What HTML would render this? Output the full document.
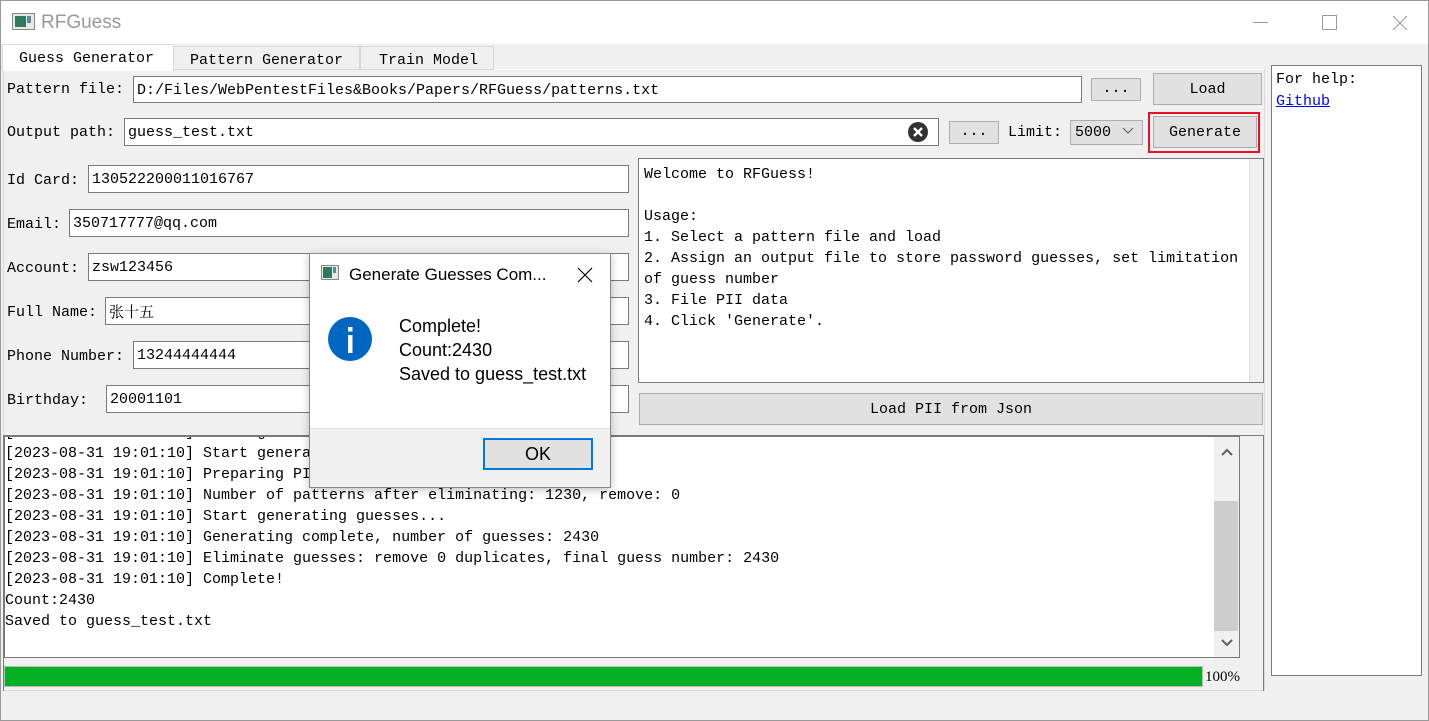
<!DOCTYPE html>
<html><head><meta charset="utf-8"><style>
*{box-sizing:border-box;margin:0;padding:0}
body{width:1429px;height:721px;background:#f0f0f0;position:relative;overflow:hidden;font-family:"Liberation Mono","Noto Sans CJK SC",monospace;font-size:15px;color:#000}
.a{position:absolute}
.t{position:absolute;white-space:pre;line-height:20px}
.in{position:absolute;background:#fff;border:1px solid #7a7a7a;white-space:pre;padding-left:3px;line-height:27px}
.btn{position:absolute;background:#e1e1e1;border:1px solid #adadad;text-align:center;white-space:pre}
.sans{font-family:"Liberation Sans","Noto Sans CJK SC",sans-serif}
</style></head><body>
<div class="a" style="left:0;top:0;width:1429px;height:44px;background:#fff;border-top:1px solid #999"></div>
<div class="a" style="left:0;top:0;width:1px;height:721px;background:#999"></div>
<div class="a" style="left:1428px;top:0;width:1px;height:721px;background:#999"></div>
<div class="a" style="left:0;top:720px;width:1429px;height:1px;background:#999"></div>
<svg class="a" style="left:12px;top:13px" width="23" height="17"><rect x="0.5" y="0.5" width="22" height="16" fill="#e8e8e8" stroke="#888"/><rect x="3" y="3" width="11" height="11" fill="#2f7a5a"/><rect x="15" y="3" width="4" height="7" fill="#5a8a9a"/></svg>
<div class="t sans" style="left:41px;top:12px;font-size:19px;line-height:22px;color:#999">RFGuess</div>
<div class="a" style="left:1253px;top:22px;width:15px;height:1px;background:#999"></div>
<div class="a" style="left:1322px;top:15px;width:15px;height:15px;border:1px solid #999"></div>
<svg class="a" style="left:1392px;top:15px" width="16" height="16"><path d="M1 1L15 15M15 1L1 15" stroke="#999" stroke-width="1"/></svg>

<div class="a" style="left:3px;top:69px;width:1262px;height:622px;border:1px solid #d9d9d9;border-top-color:#fff"></div>
<div class="a" style="left:173px;top:46px;width:187px;height:24px;border:1px solid #d9d9d9;background:#f0f0f0"></div>
<div class="a" style="left:360px;top:46px;width:134px;height:24px;border:1px solid #d9d9d9;background:#f0f0f0"></div>
<div class="a" style="left:2px;top:44px;width:172px;height:27px;background:#fff;border:1px solid #d9d9d9;border-bottom:none"></div>
<div class="t" style="left:19px;top:49px">Guess Generator</div>
<div class="t" style="left:190px;top:51px">Pattern Generator</div>
<div class="t" style="left:379px;top:51px">Train Model</div>

<div class="t" style="left:7px;top:80px">Pattern file:</div>
<div class="in" style="left:133px;top:76px;width:949px;height:27px">D:/Files/WebPentestFiles&amp;Books/Papers/RFGuess/patterns.txt</div>
<div class="btn" style="left:1091px;top:78px;width:50px;height:23px;line-height:20px">...</div>
<div class="btn" style="left:1153px;top:73px;width:109px;height:32px;line-height:31px">Load</div>

<div class="t" style="left:7px;top:123px">Output path:</div>
<div class="in" style="left:124px;top:118px;width:815px;height:28px">guess_test.txt</div>
<svg class="a" style="left:907px;top:121px" width="22" height="22"><circle cx="11" cy="11" r="10" fill="#333"/><path d="M7 7L15 15M15 7L7 15" stroke="#fff" stroke-width="2.4"/></svg>
<div class="btn" style="left:949px;top:121px;width:50px;height:23px;line-height:20px">...</div>
<div class="t" style="left:1008px;top:123px">Limit:</div>
<div class="a" style="left:1070px;top:120px;width:73px;height:25px;background:#e1e1e1;border:1px solid #adadad"></div>
<div class="t" style="left:1075px;top:123px">5000</div>
<svg class="a" style="left:1122px;top:127px" width="12" height="8"><path d="M1 1L6 6L11 1" stroke="#555" fill="none"/></svg>
<div class="btn" style="left:1153px;top:116px;width:104px;height:32px;line-height:31px">Generate</div>
<div class="a" style="left:1148px;top:112px;width:112px;height:41px;border:2px solid #e81123"></div>

<div class="t" style="left:7px;top:171px">Id Card:</div>
<div class="in" style="left:88px;top:165px;width:541px;height:28px">130522200011016767</div>
<div class="t" style="left:7px;top:215px">Email:</div>
<div class="in" style="left:69px;top:209px;width:560px;height:28px">350717777@qq.com</div>
<div class="t" style="left:7px;top:259px">Account:</div>
<div class="in" style="left:88px;top:253px;width:541px;height:28px">zsw123456</div>
<div class="t" style="left:7px;top:303px">Full Name:</div>
<div class="in" style="left:105px;top:297px;width:524px;height:28px;font-family:'Noto Serif CJK SC',serif">张十五</div>
<div class="t" style="left:7px;top:347px">Phone Number:</div>
<div class="in" style="left:133px;top:341px;width:496px;height:28px">13244444444</div>
<div class="t" style="left:7px;top:391px">Birthday:</div>
<div class="in" style="left:106px;top:385px;width:523px;height:28px">20001101</div>

<div class="a" style="left:638px;top:158px;width:626px;height:225px;background:#fff;border:1px solid #7a7a7a"></div>
<div class="a" style="left:1249px;top:159px;width:14px;height:223px;background:#f0f0f0;border-left:1px solid #ddd"></div>
<div class="t" style="left:644px;top:164px;line-height:21px">Welcome to RFGuess!

Usage:
1. Select a pattern file and load
2. Assign an output file to store password guesses, set limitation
of guess number
3. File PII data
4. Click 'Generate'.</div>
<div class="btn" style="left:639px;top:393px;width:624px;height:32px;line-height:31px">Load PII from Json</div>

<div class="a" style="left:3px;top:435px;width:1261px;height:256px;border:1px solid #7a7a7a;border-bottom:none"></div>
<div class="a" style="left:4px;top:436px;width:1236px;height:222px;background:#fff;border:1px solid #7a7a7a;overflow:hidden">
<div class="t" style="left:0;top:-15px;line-height:21px">[2023-08-31 19:01:10] Start generating guesses...
[2023-08-31 19:01:10] Start generating PII...
[2023-08-31 19:01:10] Preparing PII data...
[2023-08-31 19:01:10] Number of patterns after eliminating: 1230, remove: 0
[2023-08-31 19:01:10] Start generating guesses...
[2023-08-31 19:01:10] Generating complete, number of guesses: 2430
[2023-08-31 19:01:10] Eliminate guesses: remove 0 duplicates, final guess number: 2430
[2023-08-31 19:01:10] Complete!
Count:2430
Saved to guess_test.txt</div>
<div class="a" style="left:1209px;top:0;width:25px;height:220px;background:#f0f0f0"></div>
<div class="a" style="left:1209px;top:64px;width:24px;height:130px;background:#cdcdcd"></div>
<svg class="a" style="left:1215px;top:10px" width="14" height="10"><path d="M2 8L7 3L12 8" stroke="#606060" stroke-width="2" fill="none"/></svg>
<svg class="a" style="left:1215px;top:201px" width="14" height="10"><path d="M2 2L7 7L12 2" stroke="#606060" stroke-width="2" fill="none"/></svg>
</div>
<div class="a" style="left:4px;top:666px;width:1199px;height:21px;background:#06b025;border:1px solid #bcbcbc"></div>
<div class="t" style="left:1205px;top:667px;font-family:'Liberation Serif',serif;font-size:15px">100%</div>

<div class="a" style="left:1271px;top:65px;width:151px;height:611px;background:#fff;border:1px solid #7a7a7a"></div>
<div class="t" style="left:1276px;top:70px">For help:</div>
<div class="t" style="left:1276px;top:92px;color:#0000ff;text-decoration:underline">Github</div>

<div class="a" style="left:309px;top:253px;width:302px;height:235px;background:#fff;border:1px solid #888;box-shadow:0 2px 8px rgba(0,0,0,.25)"></div>
<div class="a" style="left:310px;top:428px;width:300px;height:59px;background:#f0f0f0;border-top:1px solid #dfdfdf"></div>
<svg class="a" style="left:321px;top:265px" width="18" height="15"><rect x="0.5" y="0.5" width="17" height="14" fill="#e8e8e8" stroke="#888"/><rect x="2" y="2" width="9" height="11" fill="#2f7a5a"/><rect x="12" y="2" width="3" height="6" fill="#5a8a9a"/></svg>
<div class="t sans" style="left:349px;top:265px;font-size:17px">Generate Guesses Com...</div>
<svg class="a" style="left:577px;top:267px" width="16" height="16"><path d="M1 1L15 15M15 1L1 15" stroke="#000" stroke-width="1.2"/></svg>
<svg class="a" style="left:327px;top:316px" width="46" height="46"><circle cx="23" cy="23" r="22" fill="#0067c0"/><rect x="21" y="19" width="4.5" height="18" fill="#fff"/><rect x="21" y="11" width="4.5" height="4.5" fill="#fff"/></svg>
<div class="t sans" style="left:399px;top:314px;font-size:18px;line-height:24px">Complete!
Count:2430
Saved to guess_test.txt</div>
<div class="a sans" style="left:483px;top:438px;width:110px;height:32px;background:#e1e1e1;border:2px solid #0078d7;text-align:center;line-height:28px;font-size:18px">OK</div>
</body></html>
